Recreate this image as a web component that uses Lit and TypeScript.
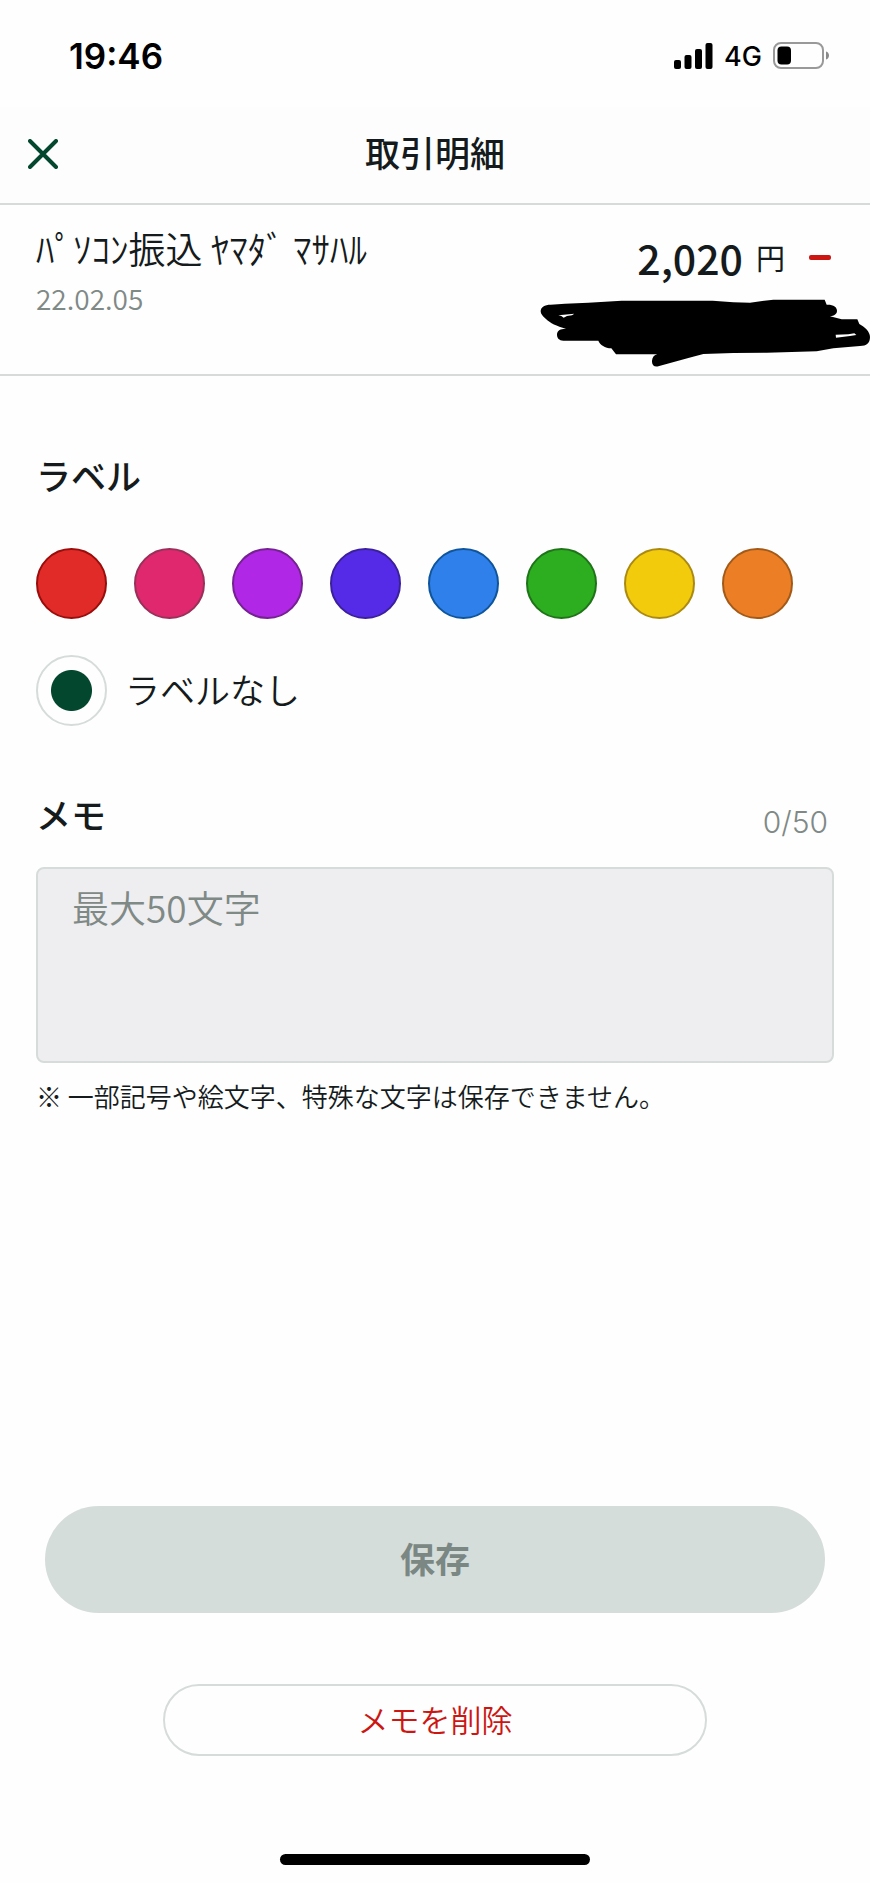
import { LitElement, html, css } from "lit";
import { customElement, state } from "lit/decorators.js";

interface Swatch {
  id: string;
  name: string;
}

const SWATCHES: Swatch[] = [
  { id: "red", name: "赤" },
  { id: "pink", name: "ピンク" },
  { id: "purple", name: "紫" },
  { id: "indigo", name: "藍" },
  { id: "blue", name: "青" },
  { id: "green", name: "緑" },
  { id: "yellow", name: "黄" },
  { id: "orange", name: "オレンジ" },
];

const MEMO_LIMIT = 50;

@customElement("status-bar")
class StatusBar extends LitElement {
  static styles = css`
    :host {
      display: flex;
      align-items: center;
      justify-content: space-between;
      height: 107px;
      padding: 4px 40px 0 69px;
      box-sizing: border-box;
      color: #000;
      font-family: Inter, "Noto Sans CJK JP", sans-serif;
    }
    .time {
      font-size: 35px;
      font-weight: 600;
      line-height: 44px;
    }
    .indicators {
      display: flex;
      align-items: center;
      gap: 11px;
    }
    .network {
      padding-top: 2px;
      font-size: 27px;
      font-weight: 500;
      line-height: 36px;
    }
    svg {
      display: block;
    }
  `;

  render() {
    return html`
      <span class="time">19:46</span>
      <div class="indicators">
        <svg width="39" height="26" viewBox="0 0 39 26" aria-hidden="true">
          <rect x="0" y="17" width="7" height="9" rx="2" />
          <rect x="10.5" y="12" width="7" height="14" rx="2" />
          <rect x="21" y="6" width="7" height="20" rx="2" />
          <rect x="31.5" y="0" width="7" height="26" rx="2" />
        </svg>
        <span class="network">4G</span>
        <svg width="57" height="27" viewBox="0 0 57 27" aria-hidden="true">
          <rect x="1" y="1" width="49" height="25" rx="7" fill="none" stroke="#999" stroke-width="2" />
          <rect x="4.5" y="4.5" width="13.5" height="18" rx="4" />
          <path d="M53 9.5c4 1 4 7 0 8z" fill="#8a8a8a" />
        </svg>
      </div>
    `;
  }
}

@customElement("app-root")
class AppRoot extends LitElement {
  static styles = css`
    :host {
      display: flex;
      flex-direction: column;
      min-height: 100vh;
      background: #fefefe;
      color: #151b1c;
      font-family: "Noto Sans CJK JP", "Noto Sans", sans-serif;
      font-weight: 350;
    }
    * {
      box-sizing: border-box;
    }
    h1,
    h2,
    p,
    fieldset {
      margin: 0;
      padding: 0;
      border: 0;
    }
    button,
    textarea {
      font: inherit;
    }
    svg {
      display: block;
    }

    .nav {
      display: grid;
      grid-template-columns: 72px 1fr 72px;
      align-items: center;
      height: 98px;
      padding-bottom: 2px;
      border-bottom: 2px solid #d6dbda;
      background: #fdfdfd;
    }
    .close {
      display: flex;
      align-items: center;
      justify-content: center;
      height: 72px;
      padding: 0;
      padding-left: 14px;
      border: 0;
      background: none;
    }
    .title {
      padding-bottom: 4px;
      font-size: 35px;
      font-weight: 500;
      line-height: 52px;
      text-align: center;
    }

    .summary {
      position: relative;
      display: flex;
      justify-content: space-between;
      min-height: 171px;
      padding: 14px 39px 52px 36px;
      border-bottom: 2px solid #d6dbda;
    }
    .payee {
      font-size: 37px;
      line-height: 58px;
    }
    .date {
      color: #7f8986;
      font-size: 28px;
      line-height: 42px;
    }
    .amount {
      display: flex;
      align-items: center;
      height: 76px;
      line-height: 76px;
    }
    .value {
      font-size: 41px;
      font-weight: 500;
    }
    .unit {
      margin-left: 13px;
      font-size: 29px;
      font-weight: 400;
    }
    .minus {
      width: 22px;
      height: 5px;
      margin-left: 24px;
      border-radius: 2px;
      background: #cc1612;
    }
    .scribble {
      position: absolute;
      right: 0;
      top: 93px;
    }

    .form {
      padding: 73px 36px 0;
    }
    .heading {
      font-size: 35px;
      font-weight: 500;
      line-height: 52px;
    }
    .swatches {
      display: flex;
      flex-wrap: wrap;
      gap: 27px;
      margin-top: 47px;
    }
    .radio {
      appearance: none;
      flex: none;
      width: 71px;
      height: 71px;
      margin: 0;
      border: 2px solid #d5dcda;
      border-radius: 50%;
      background: #fefefe;
    }
    .red { background: #e12b29; border-color: #990d0b; }
    .pink { background: #e0286f; border-color: #983058; }
    .purple { background: #b027e6; border-color: #742191; }
    .indigo { background: #562be8; border-color: #3b209c; }
    .blue { background: #2f80ea; border-color: #0f559c; }
    .green { background: #2dad20; border-color: #1f7419; }
    .yellow { background: #f2cb0c; border-color: #ab8a11; }
    .orange { background: #ec7f25; border-color: #a35a19; }
    .none:checked {
      background: radial-gradient(circle, #03472f 20px, #fefefe 21px);
    }
    .no-label {
      display: flex;
      align-items: center;
      gap: 18px;
      margin-top: 36px;
      font-size: 35px;
      line-height: 52px;
    }
    .no-label-text {
      padding-bottom: 4px;
    }

    .memo-head {
      display: flex;
      align-items: center;
      justify-content: space-between;
      margin-top: 62px;
      padding-right: 6px;
    }
    .counter {
      padding-top: 16px;
      color: #7f8986;
      font-family: Inter, sans-serif;
      font-size: 30px;
      font-weight: 300;
      line-height: 36px;
    }
    .memo {
      display: block;
      width: 100%;
      height: 196px;
      margin-top: 27px;
      padding: 11px 34px;
      border: 2px solid #d5dcda;
      border-radius: 8px;
      background: #eeeef0;
      color: inherit;
      font-size: 37px;
      line-height: 54px;
      resize: none;
      outline: none;
    }
    .memo::placeholder {
      color: #7f8986;
      opacity: 1;
    }
    .note {
      margin-top: 13px;
      font-size: 26px;
      line-height: 40px;
    }

    .actions {
      display: flex;
      flex-direction: column;
      align-items: center;
      margin-top: auto;
      padding: 48px 45px 18px;
    }
    .save,
    .delete {
      width: 100%;
      padding: 0 0 4px;
    }
    .save {
      height: 107px;
      border: 0;
      border-radius: 54px;
      background: #d5dddb;
      color: #7a8783;
      font-size: 35px;
      font-weight: 700;
    }
    .delete {
      max-width: 544px;
      height: 72px;
      margin-top: 71px;
      border: 2px solid #d5dcda;
      border-radius: 36px;
      background: #fefefe;
      color: #cc1612;
      font-size: 31px;
    }
    .home {
      width: 310px;
      height: 11px;
      margin-top: 98px;
      border-radius: 6px;
      background: #000;
    }
  `;

  @state() private label = "none";
  @state() private memo = "";

  private pick(id: string) {
    this.label = id;
  }

  private onMemo(e: Event) {
    this.memo = (e.target as HTMLTextAreaElement).value;
  }

  render() {
    return html`
      <status-bar></status-bar>

      <header class="nav">
        <button class="close" type="button" aria-label="閉じる">
          <svg width="30" height="30" viewBox="0 0 30 30" fill="none" stroke="#03472f" stroke-width="4" stroke-linecap="round">
            <path d="M2 2l26 26M28 2L2 28" />
          </svg>
        </button>
        <h1 class="title">取引明細</h1>
      </header>

      <section class="summary">
        <div>
          <p class="payee">ﾊﾟｿｺﾝ振込 ﾔﾏﾀﾞ ﾏｻﾊﾙ</p>
          <p class="date">22.02.05</p>
        </div>
        <div class="amount">
          <span class="value">2,020</span>
          <span class="unit">円</span>
          <span class="minus"></span>
        </div>
        <svg class="scribble" width="330" height="70" viewBox="60 295 990 210" aria-hidden="true">
          <path
            fill-rule="evenodd"
            d="M62 335C62 322 74 315 92 315L135 312L205 309L305 303H578L640 308L690 309L760 300H914L920 315C940 314 951 322 951 333C951 343 943 348 930 350L965 359H1012L1018 373C1034 382 1050 396 1050 412C1050 430 1040 439 1020 439L940 446L890 455L740 459L640 460L550 463L505 475L415 500C402 503 395 495 396 483C397 472 403 466 412 464H288L274 446C255 445 240 436 235 423H130C117 422 111 415 111 405C111 395 118 389 130 388H138C110 379 90 370 78 358C68 349 62 344 62 335ZM115 347L163 342L156 347L141 349L131 354L124 349ZM947 405L985 404L1003 401L1009 406L990 409L948 414Z"
          />
        </svg>
      </section>

      <main class="form">
        <fieldset aria-labelledby="label-heading">
          <h2 class="heading" id="label-heading">ラベル</h2>
          <div class="swatches">
            ${SWATCHES.map(
              (s) => html`<input
                class="radio ${s.id}"
                type="radio"
                name="label"
                aria-label=${s.name}
                .checked=${this.label === s.id}
                @change=${() => this.pick(s.id)}
              />`,
            )}
          </div>
          <label class="no-label">
            <input
              class="radio none"
              type="radio"
              name="label"
              .checked=${this.label === "none"}
              @change=${() => this.pick("none")}
            />
            <span class="no-label-text">ラベルなし</span>
          </label>
        </fieldset>

        <div class="memo-head">
          <label class="heading" for="memo">メモ</label>
          <span class="counter">${this.memo.length}/${MEMO_LIMIT}</span>
        </div>
        <textarea
          class="memo"
          id="memo"
          maxlength=${MEMO_LIMIT}
          placeholder="最大50文字"
          .value=${this.memo}
          @input=${this.onMemo}
        ></textarea>
        <p class="note">※ 一部記号や絵文字、特殊な文字は保存できません。</p>
      </main>

      <footer class="actions">
        <button class="save" type="button" ?disabled=${this.memo === ""}>保存</button>
        <button class="delete" type="button">メモを削除</button>
        <div class="home"></div>
      </footer>
    `;
  }
}
